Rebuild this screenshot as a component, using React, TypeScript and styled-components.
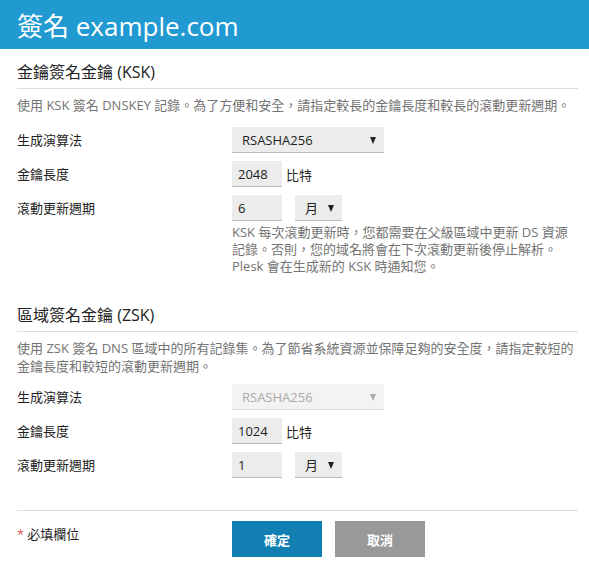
import React from 'react';
import styled, { createGlobalStyle } from 'styled-components';

const GlobalStyle = createGlobalStyle`
  body {
    margin: 0;
    background: #fff;
    font-family: 'Open Sans', 'Noto Sans CJK TC', sans-serif;
    font-size: 13px;
    color: #222;
  }
`;

const Header = styled.div`
  height: 49px;
  display: flex;
  align-items: center;
  padding-left: 17px;
  background: #219ad2;
  color: #fff;
  font-size: 26px;
`;

const Body = styled.div`
  padding: 0 11px 0 17px;
`;

const SectionTitle = styled.div<{ $top: number }>`
  margin-top: ${(p) => p.$top}px;
  padding-bottom: 5px;
  border-bottom: 1px solid #ddd;
  font-size: 16px;
  line-height: 21px;
  color: #222;
`;

const Description = styled.p<{ $bottom: number }>`
  margin: 7px 0 ${(p) => p.$bottom}px;
  font-size: 13px;
  line-height: 18px;
  color: #737373;
`;

const Row = styled.div`
  display: grid;
  grid-template-columns: 215px 1fr;
  align-items: start;
  margin-bottom: 8px;
`;

const Label = styled.div`
  line-height: 26px;
  font-size: 13px;
  color: #222;
`;

const Field = styled.div`
  display: flex;
  flex-direction: column;
`;

const Inline = styled.div`
  display: flex;
  align-items: center;
`;

const Box = styled.div<{ $width: number; $disabled?: boolean }>`
  box-sizing: border-box;
  width: ${(p) => p.$width}px;
  height: 26px;
  display: flex;
  align-items: center;
  justify-content: space-between;
  padding: 0 8px 0 6px;
  background: ${(p) => (p.$disabled ? '#f3f3f3' : '#ececec')};
  border-bottom: 1px solid ${(p) => (p.$disabled ? '#dcdcdc' : '#b3bcc4')};
  color: ${(p) => (p.$disabled ? '#aaa' : '#222')};
  font-size: 13px;
`;

const SelectBox = styled(Box)`
  padding-left: 10px;
`;

const Arrow = styled.span<{ $disabled?: boolean }>`
  width: 0;
  height: 0;
  margin-top: 1px;
  border-left: 3.5px solid transparent;
  border-right: 3.5px solid transparent;
  border-top: 7px solid ${(p) => (p.$disabled ? '#aaa' : '#222')};
`;

const Unit = styled.span`
  margin-left: 4px;
  font-size: 13px;
`;

const Spacer = styled.span`
  width: 13px;
`;

const Help = styled.div`
  margin-top: 3px;
  font-size: 13px;
  line-height: 17px;
  color: #737373;
`;

const Divider = styled.div`
  margin-top: 32px;
  border-top: 1px solid #ddd;
`;

const Footer = styled.div`
  display: grid;
  grid-template-columns: 215px auto;
  padding-top: 10px;
`;

const Required = styled.div`
  line-height: 26px;
  font-size: 13px;
  color: #222;
`;

const Star = styled.span`
  color: #d9534f;
  margin-right: 3px;
`;

const Buttons = styled.div`
  display: flex;
  gap: 13px;
`;

const Button = styled.button<{ $primary?: boolean }>`
  width: 90px;
  height: 36px;
  border: none;
  padding: 0;
  background: ${(p) => (p.$primary ? '#127fb2' : '#999')};
  color: #fff;
  font-family: inherit;
  font-size: 13px;
  font-weight: bold;
`;

const Select = ({ value, width, disabled }: { value: string; width: number; disabled?: boolean }) => (
  <SelectBox $width={width} $disabled={disabled}>
    <span>{value}</span>
    <Arrow $disabled={disabled} />
  </SelectBox>
);

const KeySection = ({
  title,
  top,
  desc,
  descBottom,
  algDisabled,
  length,
  period,
  help,
}: {
  title: string;
  top: number;
  desc: React.ReactNode;
  descBottom: number;
  algDisabled?: boolean;
  length: string;
  period: string;
  help?: React.ReactNode;
}) => (
  <>
    <SectionTitle $top={top}>{title}</SectionTitle>
    <Description $bottom={descBottom}>{desc}</Description>
    <Row>
      <Label>生成演算法</Label>
      <Field>
        <Select value="RSASHA256" width={152} disabled={algDisabled} />
      </Field>
    </Row>
    <Row>
      <Label>金鑰長度</Label>
      <Inline>
        <Box $width={50}>{length}</Box>
        <Unit>比特</Unit>
      </Inline>
    </Row>
    <Row>
      <Label>滾動更新週期</Label>
      <Field>
        <Inline>
          <Box $width={50}>{period}</Box>
          <Spacer />
          <Select value="月" width={47} />
        </Inline>
        {help && <Help>{help}</Help>}
      </Field>
    </Row>
  </>
);

export default function App() {
  return (
    <>
      <GlobalStyle />
      <Header>簽名 example.com</Header>
      <Body>
        <KeySection
          title="金鑰簽名金鑰 (KSK)"
          top={13}
          descBottom={13}
          desc="使用 KSK 簽名 DNSKEY 記錄。為了方便和安全，請指定較長的金鑰長度和較長的滾動更新週期。"
          length="2048"
          period="6"
          help={
            <>
              KSK 每次滾動更新時，您都需要在父級區域中更新 DS 資源
              <br />
              記錄。否則，您的域名將會在下次滾動更新後停止解析。
              <br />
              Plesk 會在生成新的 KSK 時通知您。
            </>
          }
        />
        <KeySection
          title="區域簽名金鑰 (ZSK)"
          top={30}
          descBottom={9}
          desc={
            <>
              使用 ZSK 簽名 DNS 區域中的所有記錄集。為了節省系統資源並保障足夠的安全度，請指定較短的
              <br />
              金鑰長度和較短的滾動更新週期。
            </>
          }
          algDisabled
          length="1024"
          period="1"
        />
        <Divider />
        <Footer>
          <Required>
            <Star>*</Star>必填欄位
          </Required>
          <Buttons>
            <Button $primary>確定</Button>
            <Button>取消</Button>
          </Buttons>
        </Footer>
      </Body>
    </>
  );
}
